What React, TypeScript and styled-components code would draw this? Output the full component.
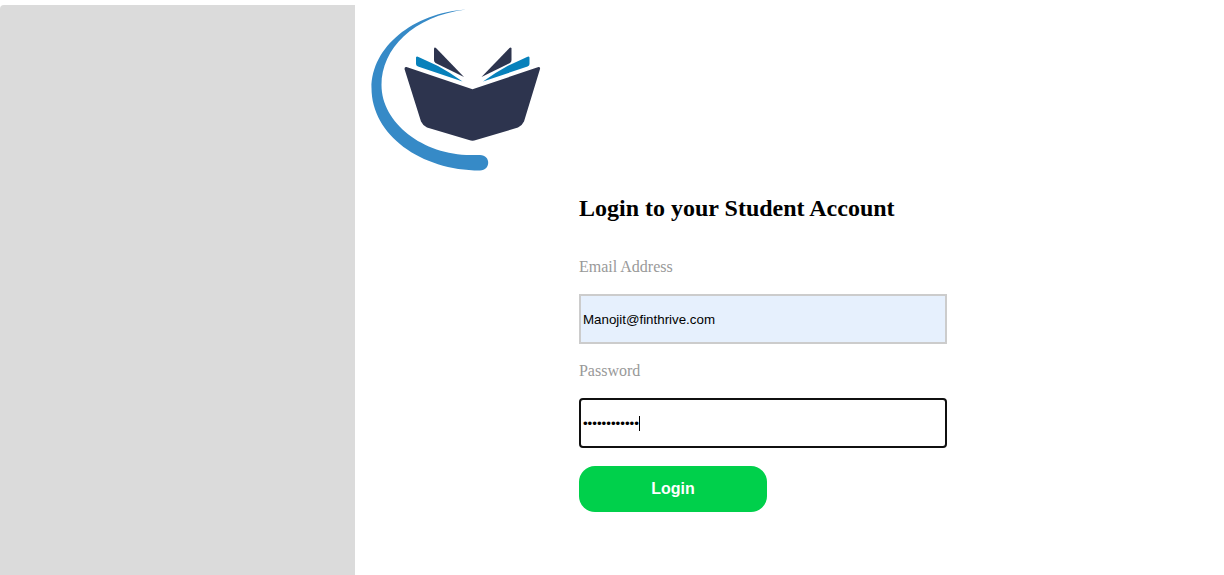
import React, { useState } from "react";
import styled, { createGlobalStyle } from "styled-components";

const GlobalStyle = createGlobalStyle`
  * { box-sizing: border-box; }
  body {
    margin: 0;
    background: #fff;
    font-family: "Liberation Serif", "Times New Roman", serif;
  }
`;

const Page = styled.div`
  display: flex;
  min-height: 100vh;
  padding-top: 5px;
`;

const SidePanel = styled.aside`
  flex: 0 0 29%;
  background: #dbdbdb;
  border-top-left-radius: 4px;
`;

const Main = styled.main`
  flex: 1;
  padding: 0 16px;
`;

const Logo = styled.svg`
  display: block;
  width: 170px;
  height: 170px;
`;

const LoginForm = styled.form`
  display: flex;
  flex-direction: column;
  align-items: flex-start;
  max-width: 576px;
  margin-top: 20px;
  padding-left: 208px;
`;

const Title = styled.h1`
  margin: 0 0 36px;
  font-size: 24px;
  line-height: 27px;
`;

const Label = styled.label`
  margin-bottom: 18px;
  font-size: 16px;
  line-height: 18px;
  color: #999;
`;

const Field = styled.div`
  position: relative;
  width: 100%;
  margin-bottom: 18px;
`;

const Input = styled.input<{ $filled?: boolean; $active?: boolean }>`
  display: block;
  width: 100%;
  height: 50px;
  padding: 1px 2px;
  border: 2px solid ${(p) => (p.$active ? "#101010" : "#ccc")};
  border-radius: ${(p) => (p.$active ? 4 : 0)}px;
  outline: none;
  background: ${(p) => (p.$filled ? "#e6f0fd" : "#fff")};
  color: #000;
  font-family: "Liberation Sans", Arial, sans-serif;
`;

const Caret = styled.span`
  position: absolute;
  top: 18px;
  left: 60px;
  width: 1px;
  height: 15px;
  background: #000;
`;

const LoginButton = styled.button`
  width: 188px;
  height: 46px;
  border: 0;
  border-radius: 16px;
  background: #00d04b;
  color: #fff;
  font-family: "Liberation Sans", Arial, sans-serif;
  font-size: 16px;
  font-weight: 700;
  cursor: pointer;
`;

function BookLogo() {
  return (
    <Logo viewBox="0 0 170 170" role="img" aria-label="Open book">
      <path
        fill="#368ac7"
        d="M95 4.500C42 8 .5 42 .5 83C.5 130 50 165.500 109 165.500C120 165.500 120 150 109 150H100C52 150 10.500 118 10.500 80C10.500 44 42 11 95 4.500Z"
      />
      <g fill="#2d344e">
        <path d="M35.500 62L101.500 84.300L167.500 62Q169.500 62 169 64L153 116.500Q151.500 120 147 122.500L105 135Q101.500 136.500 98 135L56 122.500Q51.500 120 50 116.500L33.500 64Q33.500 61.500 35.500 62Z" />
        <path d="M63 43.500Q63.500 42 65 43L93 72L64.500 58Q63 57 63 55Z" />
        <path d="M140.500 43.500Q140 42 138.500 43L110.500 72L139 58Q140.500 57 140.500 55Z" />
      </g>
      <g fill="#0781bb">
        <path d="M45 52.500Q45.500 51 47.500 52L67 61Q80 68 91.500 76.500L47 61.500Q45 60.500 45 59Z" />
        <path d="M158.500 52.500Q158 51 156 52L136.500 61Q123.500 68 112 76.500L156.500 61.500Q158.500 60.500 158.500 59Z" />
      </g>
    </Logo>
  );
}

export default function App() {
  const [email, setEmail] = useState("Manojit@finthrive.com");
  const [password, setPassword] = useState("student12345");

  return (
    <>
      <GlobalStyle />
      <Page>
        <SidePanel />
        <Main>
          <BookLogo />
          <LoginForm onSubmit={(e) => e.preventDefault()}>
            <Title>Login to your Student Account</Title>
            <Label htmlFor="email">Email Address</Label>
            <Field>
              <Input id="email" type="email" $filled value={email} onChange={(e) => setEmail(e.target.value)} />
            </Field>
            <Label htmlFor="password">Password</Label>
            <Field>
              <Input id="password" type="password" $active value={password} onChange={(e) => setPassword(e.target.value)} />
              <Caret aria-hidden="true" />
            </Field>
            <LoginButton type="submit">Login</LoginButton>
          </LoginForm>
        </Main>
      </Page>
    </>
  );
}
